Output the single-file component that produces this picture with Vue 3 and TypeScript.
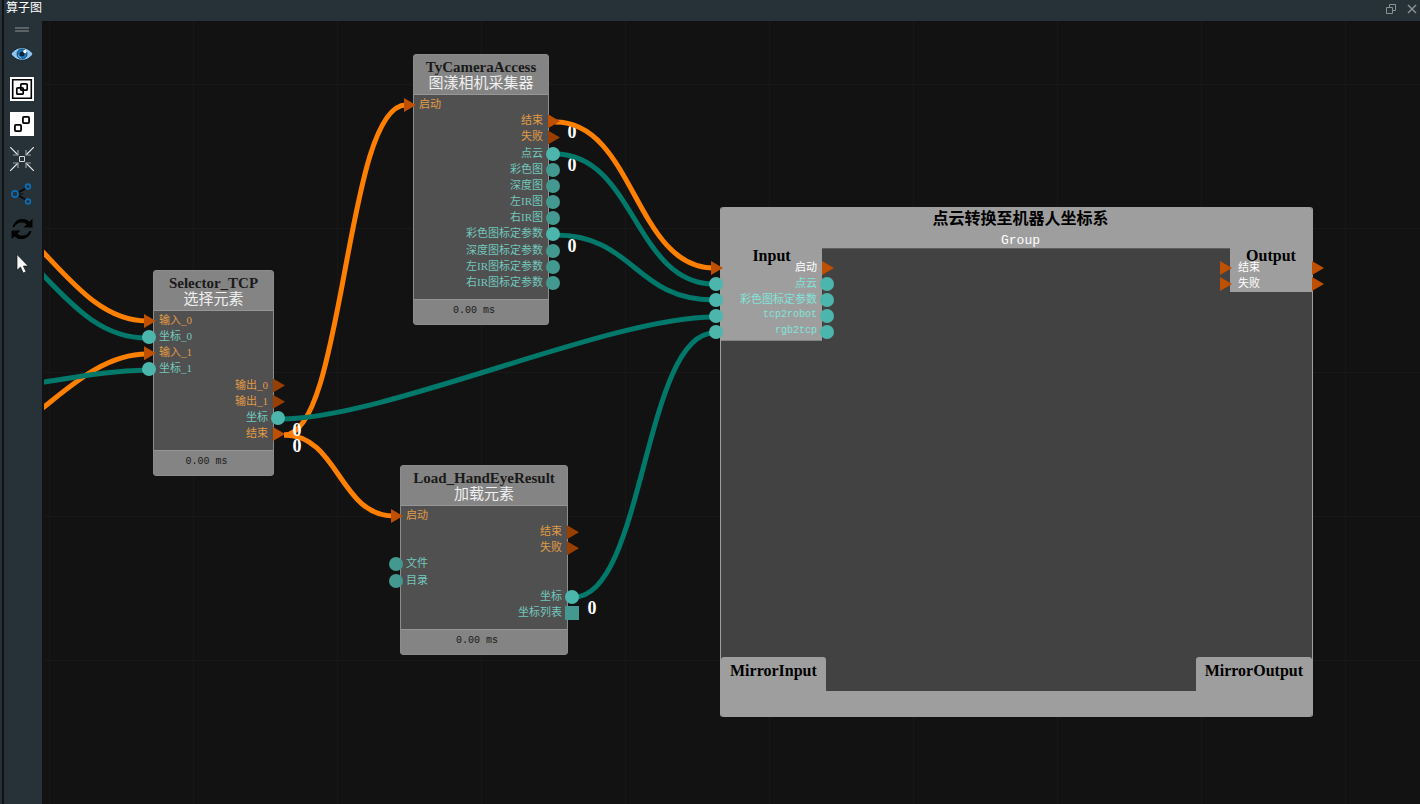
<script setup lang="ts">
type Shape = 'tri' | 'dot' | 'box'

interface Port {
  label: string
  side: 'in' | 'out'
  shape: Shape
  linked?: boolean
}

interface GraphNode {
  id: string
  title: string
  subtitle: string
  x: number
  y: number
  w: number
  h: number
  ports: Port[]
}

interface Badge {
  x: number
  y: number
  under?: boolean
}

const flow = (label: string, side: 'in' | 'out', linked = false): Port => ({ label, side, shape: 'tri', linked })
const data = (label: string, side: 'in' | 'out', linked = false): Port => ({ label, side, shape: 'dot', linked })

const nodes: GraphNode[] = [
  {
    id: 'selector', title: 'Selector_TCP', subtitle: '选择元素', x: 109, y: 249, w: 121, h: 206,
    ports: [
      flow('输入_0', 'in', true), data('坐标_0', 'in', true),
      flow('输入_1', 'in', true), data('坐标_1', 'in', true),
      flow('输出_0', 'out'), flow('输出_1', 'out'),
      data('坐标', 'out', true), flow('结束', 'out', true),
    ],
  },
  {
    id: 'camera', title: 'TyCameraAccess', subtitle: '图漾相机采集器', x: 369, y: 33, w: 136, h: 271,
    ports: [
      flow('启动', 'in', true), flow('结束', 'out', true), flow('失败', 'out'),
      data('点云', 'out', true), data('彩色图', 'out'), data('深度图', 'out'),
      data('左IR图', 'out'), data('右IR图', 'out'), data('彩色图标定参数', 'out', true),
      data('深度图标定参数', 'out'), data('左IR图标定参数', 'out'), data('右IR图标定参数', 'out'),
    ],
  },
  {
    id: 'load', title: 'Load_HandEyeResult', subtitle: '加载元素', x: 356, y: 444, w: 168, h: 190,
    ports: [
      flow('启动', 'in', true), flow('结束', 'out'), flow('失败', 'out'),
      data('文件', 'in'), data('目录', 'in'), data('坐标', 'out', true),
      { label: '坐标列表', side: 'out', shape: 'box' },
    ],
  },
]

const group = { x: 676, y: 186, w: 593, h: 510 }

const groupInputs: { label: string; shape: Shape; latin?: boolean }[] = [
  { label: '启动', shape: 'tri' },
  { label: '点云', shape: 'dot' },
  { label: '彩色图标定参数', shape: 'dot' },
  { label: 'tcp2robot', shape: 'dot', latin: true },
  { label: 'rgb2tcp', shape: 'dot', latin: true },
]
const groupOutputs = ['结束', '失败']

// Horizontal handles reach half way across, but never further than `reach`.
const link = (x1: number, y1: number, x2: number, y2: number, reach = 106): string => {
  const h = Math.min((x2 - x1) / 2, reach)
  return `M${x1} ${y1}C${x1 + h} ${y1} ${x2 - h} ${y2} ${x2} ${y2}`
}

const wires: { kind: 'flow' | 'data'; d: string }[] = [
  { kind: 'flow', d: 'M-10 222L0 232C32 266 61 300 103 300' },
  { kind: 'data', d: 'M-10 244L0 255C32 288 59 317 103 317' },
  { kind: 'flow', d: 'M-10 394L0 386C30 362 63 333 103 333' },
  { kind: 'data', d: 'M-10 363L0 361C40 355 66 350 103 349' },
  { kind: 'flow', d: link(240, 414, 362, 84) },
  { kind: 'flow', d: link(240, 414, 350, 495) },
  { kind: 'data', d: link(236, 398, 670, 296) },
  { kind: 'flow', d: link(511, 101, 670, 247) },
  { kind: 'data', d: link(511, 133, 670, 263) },
  { kind: 'data', d: link(511, 214, 670, 279) },
  { kind: 'data', d: link(530, 576, 670, 312) },
]

const badges: Badge[] = [
  { x: 528, y: 111, under: true },
  { x: 528, y: 144, under: true },
  { x: 528, y: 225, under: true },
  { x: 253, y: 409 },
  { x: 253, y: 425 },
  { x: 548, y: 587 },
]

const place = (b: { x: number; y: number; w?: number; h?: number }) => ({
  left: `${b.x}px`,
  top: `${b.y}px`,
  ...(b.w ? { width: `${b.w}px` } : {}),
  ...(b.h ? { height: `${b.h}px` } : {}),
})
</script>

<template>
  <div class="window">
    <div class="edge"></div>
    <section class="panel">
      <header class="titlebar">
        <h1>算子图</h1>
        <div class="controls">
          <button type="button" aria-label="浮动">
            <svg width="10" height="10" viewBox="0 0 10 10"><path d="M3.5 3V.5h6v6H7M.5 3.5h6v6h-6z" /></svg>
          </button>
          <button type="button" aria-label="关闭">
            <svg width="10" height="10" viewBox="0 0 10 10"><path d="M1 1l8 8M9 1l-8 8" stroke-width="1.5" /></svg>
          </button>
        </div>
      </header>

      <div class="workspace">
        <nav class="toolbar" aria-label="工具栏">
          <span class="grip"></span>
          <button type="button" aria-label="显示">
            <svg width="24" height="24" viewBox="0 0 24 24">
              <path d="M.8 12C4 7.600 8 5.600 12 5.600S20 7.600 23.200 12C20 16.400 16 18.400 12 18.400S4 16.400.8 12z" fill="#8fc4ee" stroke="#10222e" />
              <circle cx="12" cy="12" r="5" fill="#1d7dc4" stroke="#12384f" stroke-width=".8" />
              <circle cx="12" cy="12" r="2.500" fill="#102432" />
              <path d="M8.500 13.500a4 4 0 0 0 3 2.700" fill="none" stroke="#7fc0f0" />
              <circle cx="15" cy="9.500" r="1.700" fill="#fff" />
            </svg>
          </button>
          <button type="button" aria-label="组合">
            <svg width="24" height="24" viewBox="0 0 24 24">
              <path d="M0 0h24v24H0z" fill="#fff" />
              <g fill="none" stroke="#000">
                <path d="M2.700 2.700h18.600v18.600H2.700z" stroke-width="1.600" />
                <rect x="6.800" y="10.800" width="6.400" height="6.400" rx="1" stroke-width="1.700" />
                <rect x="10.800" y="6.800" width="6.400" height="6.400" rx="1" stroke-width="1.700" />
              </g>
            </svg>
          </button>
          <button type="button" aria-label="取消组合">
            <svg width="24" height="24" viewBox="0 0 24 24">
              <path d="M0 0h24v24H0z" fill="#fff" />
              <g fill="none" stroke="#000" stroke-width="1.800">
                <rect x="4.900" y="12.900" width="6.200" height="6.200" rx="1" />
                <rect x="12.900" y="4.900" width="6.200" height="6.200" rx="1" />
              </g>
            </svg>
          </button>
          <button type="button" aria-label="居中">
            <svg width="24" height="24" viewBox="0 0 24 24" fill="none">
              <path d="M0 0l8 8M24 0l-8 8M0 24l8-8M24 24l-8-8" stroke="#e4e7e8" stroke-width="1.200" />
              <path d="M3 8h5V3M21 8h-5V3M3 16h5v5M21 16h-5v5" stroke="#929a9d" stroke-width="1.200" />
              <path d="M9.500 9.500h5v5h-5z" stroke="#d5d9da" />
            </svg>
          </button>
          <button type="button" aria-label="连接">
            <svg width="24" height="24" viewBox="0 0 24 24" fill="none">
              <path d="M8.500 10.500L15.500 6.500M8.500 13.500l7 4" stroke="#05090b" stroke-width="1.500" />
              <path d="M9 12h5" stroke="#05090b" stroke-width="1.500" stroke-dasharray="1.500 1" />
              <g stroke="#0a6fb8" stroke-width="1.600">
                <circle cx="5" cy="12" r="3.100" /><circle cx="18" cy="4.500" r="2.400" /><circle cx="18" cy="19.500" r="2.400" />
              </g>
            </svg>
          </button>
          <button type="button" aria-label="刷新">
            <svg width="24" height="24" viewBox="0 0 24 24">
              <path d="M2.500 10C4 4.500 8 2 12.500 2c2.800 0 5 .9 6.900 2.600L22.500 2v8.500H13.500l3.200-3.200C13 4 6.500 5 4.500 10z" />
              <path d="M21.500 14C20 19.500 16 22 11.500 22c-2.800 0-5-.9-6.900-2.600L1.500 22v-8.500h9l-3.200 3.200C11 20 17.500 19 19.500 14z" />
            </svg>
          </button>
          <button type="button" aria-label="选择">
            <svg width="24" height="24" viewBox="0 0 24 24">
              <path d="M7 2.500v15.800l3.500-3.200 2.700 5.900 2.900-1.300-2.700-5.600h4.800z" fill="#f7f7f7" stroke="#15191b" stroke-width=".7" />
            </svg>
          </button>
        </nav>

        <main class="canvas">
          <span v-for="(b, i) in badges.filter((v) => v.under)" :key="`u${i}`" class="badge" :style="place(b)">0</span>
          <svg class="wires" width="100%" height="100%" aria-hidden="true">
            <path v-for="(w, i) in wires" :key="i" :d="w.d" :class="w.kind" />
          </svg>

          <article v-for="n in nodes" :key="n.id" class="node" :style="place(n)">
            <header>
              <h2>{{ n.title }}</h2>
              <p>{{ n.subtitle }}</p>
            </header>
            <ul class="ports">
              <li v-for="(p, i) in n.ports" :key="i" :class="[p.side, p.shape]">
                <i class="pin" :class="[p.shape, p.side, { linked: p.linked }]"></i>
                <span>{{ p.label }}</span>
              </li>
            </ul>
            <footer>0.00 ms</footer>
          </article>

          <article class="group" :style="place(group)">
            <header>
              <h2>点云转换至机器人坐标系</h2>
              <p>Group</p>
            </header>
            <div class="inside">
              <div class="row top">
                <section class="terminal input">
                  <h3>Input</h3>
                  <ul>
                    <li v-for="p in groupInputs" :key="p.label" class="out" :class="p.shape">
                      <i class="pin in linked" :class="p.shape"></i>
                      <span :class="{ latin: p.latin }">{{ p.label }}</span>
                      <i class="pin out linked" :class="p.shape"></i>
                    </li>
                  </ul>
                </section>
                <section class="terminal output">
                  <h3>Output</h3>
                  <ul>
                    <li v-for="p in groupOutputs" :key="p" class="in tri">
                      <i class="pin tri in linked"></i>
                      <span>{{ p }}</span>
                      <i class="pin tri out linked"></i>
                    </li>
                  </ul>
                </section>
              </div>
              <div class="row bottom">
                <h3 class="mirror">MirrorInput</h3>
                <h3 class="mirror">MirrorOutput</h3>
              </div>
            </div>
            <footer></footer>
          </article>

          <span v-for="(b, i) in badges.filter((v) => !v.under)" :key="`o${i}`" class="badge" :style="place(b)">0</span>
        </main>
      </div>
    </section>
  </div>
</template>

<style>
body {
  margin: 0;
  background: #121212;
}
</style>

<style scoped>
.window {
  display: flex;
  gap: 2px;
  height: 100vh;
  background: #121212;
  font-family: "Liberation Serif", "Noto Sans CJK SC", serif;
}
h1, h2, h3, p, ul {
  margin: 0;
  padding: 0;
  list-style: none;
}
button {
  display: flex;
  align-items: center;
  justify-content: center;
  padding: 0;
  border: 0;
  background: none;
}
.edge {
  width: 2px;
  background: #263238;
}
.panel {
  flex: 1;
  min-width: 0;
  display: flex;
  flex-direction: column;
}
.titlebar {
  display: flex;
  justify-content: space-between;
  height: 21px;
  padding: 0 3px 0 2px;
  background: #263238;
}
.titlebar h1 {
  font: 400 12px/14px "Noto Sans CJK SC", sans-serif;
  color: #fff;
}
.controls {
  display: flex;
  gap: 11px;
  height: 18px;
}
.controls svg {
  fill: none;
  stroke: #8a9092;
}
.workspace {
  flex: 1;
  min-height: 0;
  display: flex;
  gap: 2px;
}
.toolbar {
  box-sizing: border-box;
  display: flex;
  flex-direction: column;
  align-items: center;
  width: 38px;
  padding-right: 2px;
  background: #263238;
}
.toolbar button {
  width: 36px;
  height: 35px;
}
.grip {
  box-sizing: border-box;
  width: 14px;
  height: 5px;
  margin: 6px 0 4px;
  border: solid #5b6366;
  border-width: 2px 0;
}
.canvas {
  position: relative;
  flex: 1;
  overflow: hidden;
  background-color: #121212;
  background-image: linear-gradient(90deg, #181818 1px, transparent 1px), linear-gradient(#181818 1px, transparent 1px);
  background-size: 144px 144px;
  background-position: 5px 63px;
}
.wires {
  position: absolute;
  inset: 0;
}
.wires path {
  fill: none;
  stroke-width: 5;
}
.wires .flow {
  stroke: #ff8000;
}
.wires .data {
  stroke: #00796b;
}
.badge {
  position: absolute;
  width: 20px;
  margin: -8px 0 0 -10px;
  font-weight: 700;
  font-size: 18px;
  line-height: 16px;
  text-align: center;
  color: #fff;
}
.node {
  position: absolute;
  box-sizing: border-box;
  display: flex;
  flex-direction: column;
  border: 1px solid #8c8c8c;
  border-radius: 3px;
  background: #505050;
}
.node header {
  box-sizing: border-box;
  height: 40px;
  padding-top: 4px;
  border-bottom: 1px solid #969696;
  background: #848484;
  text-align: center;
}
.node h2 {
  font-size: 15px;
  line-height: 17px;
  color: #1a1a1a;
}
.node p {
  font-size: 15px;
  line-height: 15px;
  color: #f0f0f0;
}
.node footer {
  box-sizing: border-box;
  height: 25px;
  padding-right: 14px;
  border-top: 1px solid #969696;
  background: #848484;
  font: 10px/22px "Liberation Mono", monospace;
  text-align: center;
  color: #1a1a1a;
}
.ports {
  flex: 1;
  display: grid;
  grid-auto-rows: 1fr;
  padding: 2px 0 8px;
}
li {
  position: relative;
  display: flex;
  align-items: center;
  padding: 0 5px 2px;
  font-size: 11px;
  line-height: 14px;
  white-space: nowrap;
  color: #72c7be;
}
li.out {
  justify-content: flex-end;
}
li.tri {
  color: #e09a45;
}
.pin {
  position: absolute;
  top: 50%;
  width: 14px;
  height: 14px;
  margin-top: -7px;
  background: #43998f;
}
.pin.dot {
  border-radius: 50%;
}
.pin.dot.linked {
  background: #4db6ac;
}
.pin.tri {
  width: 12px;
  background: #994000;
  clip-path: polygon(0 0, 100% 50%, 0 100%);
}
.pin.tri.linked {
  background: #bf5000;
}
.pin.in {
  left: -12px;
}
.pin.out {
  right: -12px;
}
.pin.tri.in {
  left: -10px;
}
.group {
  position: absolute;
  box-sizing: border-box;
  display: flex;
  flex-direction: column;
  border: solid #9e9e9e;
  border-width: 0 1px;
  border-radius: 3px;
  background: #424242;
}
.group > header {
  height: 41px;
  border-radius: 3px 3px 0 0;
  background: #9e9e9e;
  text-align: center;
}
.group h2 {
  padding-left: 8px;
  font-size: 16px;
  line-height: 23px;
  color: #000;
}
.group p {
  padding-left: 8px;
  font: 13px/21px "Liberation Mono", monospace;
  color: #fff;
}
.group > footer {
  height: 26px;
  border-radius: 0 0 3px 3px;
  background: #9e9e9e;
}
.inside {
  flex: 1;
  display: flex;
  flex-direction: column;
  justify-content: space-between;
}
.row {
  display: flex;
  justify-content: space-between;
}
.row.top {
  align-items: flex-start;
  box-shadow: inset 0 1px #5e5e5e;
}
.terminal {
  background: #9e9e9e;
}
.terminal.input {
  width: 101px;
  border-bottom: 1px solid #848484;
}
.terminal.output {
  width: 82px;
}
.group h3 {
  font-size: 16px;
  text-align: center;
  color: #000;
}
.terminal h3 {
  height: 12px;
  line-height: 15px;
}
.terminal li {
  height: 14px;
  padding: 0 5px 2px;
  color: #80e5da;
}
.terminal li.tri {
  color: #fff;
}
.terminal.output li {
  padding: 0 8px 2px;
}
.terminal .latin {
  font: 10px/14px "Liberation Mono", monospace;
}
.mirror {
  height: 34px;
  padding: 0 9px;
  border-radius: 3px 3px 0 0;
  background: #9e9e9e;
  line-height: 28px;
}
</style>
